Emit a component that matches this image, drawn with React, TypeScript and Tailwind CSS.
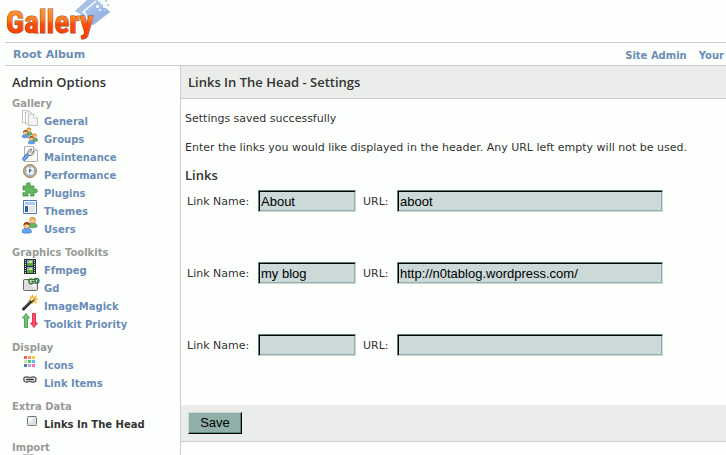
import type { ReactNode } from 'react';

type IconName =
  | 'pages'
  | 'groups'
  | 'wrench'
  | 'clock'
  | 'puzzle'
  | 'theme'
  | 'users'
  | 'film'
  | 'gd'
  | 'wand'
  | 'arrows'
  | 'grid'
  | 'chain'
  | 'box'
  | 'import';

interface MenuItem {
  label?: string;
  icon: IconName;
  active?: boolean;
}

const menu: { title: string; items: MenuItem[] }[] = [
  {
    title: 'Gallery',
    items: [
      { label: 'General', icon: 'pages' },
      { label: 'Groups', icon: 'groups' },
      { label: 'Maintenance', icon: 'wrench' },
      { label: 'Performance', icon: 'clock' },
      { label: 'Plugins', icon: 'puzzle' },
      { label: 'Themes', icon: 'theme' },
      { label: 'Users', icon: 'users' },
    ],
  },
  {
    title: 'Graphics Toolkits',
    items: [
      { label: 'Ffmpeg', icon: 'film' },
      { label: 'Gd', icon: 'gd' },
      { label: 'ImageMagick', icon: 'wand' },
      { label: 'Toolkit Priority', icon: 'arrows' },
    ],
  },
  {
    title: 'Display',
    items: [
      { label: 'Icons', icon: 'grid' },
      { label: 'Link Items', icon: 'chain' },
    ],
  },
  {
    title: 'Extra Data',
    items: [{ label: 'Links In The Head', icon: 'box', active: true }],
  },
  { title: 'Import', items: [{ icon: 'import' }] },
];

const links = [
  { name: 'About', url: 'aboot' },
  { name: 'my blog', url: 'http://n0tablog.wordpress.com/' },
  { name: '', url: '' },
];

const Person = ({ x, y, scale, hair, shirt }: { x: number; y: number; scale: number; hair: string; shirt: string }) => (
  <g transform={`translate(${x} ${y}) scale(${scale})`}>
    <path d="M0 8.5C0 6 1.6 5 4 5s4 1 4 3.5C7 9.7 1 9.7 0 8.5z" fill={shirt} stroke="#3d6a9c" strokeWidth=".4" />
    <circle cx="4" cy="3" r="2.5" fill="#f5c896" stroke="#96673a" strokeWidth=".4" />
    <path d="M1.3 3C1 .9 2.4 0 4 0s3 .9 2.7 3C5.8 1.9 4 2.6 3.2 1.8 2.8 2.6 2 2.4 1.3 3z" fill={hair} />
  </g>
);

const icons: Record<IconName, ReactNode> = {
  pages: (
    <g stroke="#b4b4b4" strokeWidth=".8" fill="#fff">
      <path d="M.5.5h5l3 3v9h-8z" />
      <path d="M3.5 2h5l3 3v9h-8z" />
      <path d="M6.5 4h5l4 4.5v7h-9z" fill="#f5f5f5" />
      <path d="M11.5 4c.3 2-.2 3.500 0 4 1 .2 3-.2 4 .5" />
    </g>
  ),
  groups: (
    <>
      <Person x={3.5} y={-0.5} scale={0.85} hair="#d99a26" shirt="#62b354" />
      <Person x={0} y={2} scale={0.85} hair="#9c4a1d" shirt="#5ea2e6" />
      <Person x={9} y={5.5} scale={0.85} hair="#d99a26" shirt="#62b354" />
      <Person x={6} y={8} scale={0.85} hair="#9c4a1d" shirt="#5ea2e6" />
    </>
  ),
  wrench: (
    <>
      <path d="M2.5.5h9l4 4v11h-13z" fill="#fafafa" stroke="#b4b4b4" />
      <path d="M11.5.5v4h4" fill="#e6e6e6" stroke="#b4b4b4" />
      <path d="M2 13 6 8.5" stroke="#3263a8" strokeWidth="3.5" strokeLinecap="round" />
      <path d="M2 13 6 8.5" stroke="#78aef0" strokeWidth="2" strokeLinecap="round" />
      <path d="M6 9c-1-3 .5-6 4-6L8.500 5 10 6.500 12 5c.3 3-2 5-5 4.500z" fill="#d8d8d8" stroke="#666" strokeWidth=".8" />
    </>
  ),
  clock: (
    <>
      <circle cx="8" cy="7" r="6.6" fill="#d8b27a" stroke="#8a6a3c" strokeWidth=".7" />
      <circle cx="8" cy="7" r="5" fill="#eef5fd" stroke="#6f89ad" strokeWidth=".8" />
      <path d="M8 3v1M8 10v1M4 7h1M11 7h1" stroke="#8494a8" />
      <path d="M7 4.5v5L10 6z" fill="#56718f" />
    </>
  ),
  puzzle: (
    <path
      d="M1 4h4c.4-.6-.8-1-.5-2.200C4.800.3 8 .3 8.300 1.800 8.500 3 7.500 3.400 8 4h4v3.500c.8.5 1-.6 2.200-.4 1.500.3 1.500 3.300 0 3.600-1.200.2-1.400-.9-2.200-.4V14H8.500c-.5-.7.5-1 .3-2-.3-1.200-2.700-1.200-3 0-.2 1 .7 1.300.3 2H1v-3.500c.7-.5 1 .5 2 .2 1.200-.3 1.200-2.700 0-3-1-.2-1.300.7-2 .3z"
      fill="#62b75f"
      stroke="#378b3a"
      strokeWidth=".8"
    />
  ),
  theme: (
    <>
      <path d="M1.5.5h13v13h-13z" fill="#fff" stroke="#4d78bd" />
      <path d="M3 2h10v3H3z" fill="#a3cdf5" />
      <path d="M3 6h3v6H3z" fill="#2c5fa8" />
      <path d="M7 6h6v6H7z" fill="#e3e3e3" />
    </>
  ),
  users: (
    <>
      <Person x={6} y={-1} scale={1.15} hair="#dba52f" shirt="#63b85a" />
      <Person x={0} y={4} scale={1.2} hair="#984619" shirt="#5ba5f5" />
    </>
  ),
  film: (
    <>
      <path d="M2 0h12v15H2z" fill="#2d2d2d" />
      <path d="M5 1h6v6H5zM5 8h6v6H5z" fill="#69b8f2" />
      <path d="M5 5c2-2 4 0 6-2v4H5zM5 12c2-2 4 0 6-2v4H5z" fill="#57a93e" />
      <path d="M7 2h3v2H7zM7 9h3v2H7z" fill="#f1dd59" />
      <path d="M3.500 1v14M12.500 1v14" stroke="#e0e0e0" strokeDasharray="1 1" />
    </>
  ),
  gd: (
    <>
      <rect x="1.5" y="2.5" width="14" height="11" rx="1" fill="#dedede" stroke="#656565" />
      <path d="M3 4h11v8z" fill="#f3f3f3" />
      <text x="6" y="7" fill="#1e7226" stroke="#1e7226" strokeWidth=".3" fontSize="8" fontWeight="700" fontFamily="Liberation Sans, sans-serif" transform="rotate(-7 11 6)">
        GD
      </text>
    </>
  ),
  wand: (
    <>
      <path d="m10.500-.5 1 2.500 3-1.500L13.500 3l2.500 1-2.500 1.500 1 3-3-1.500-1.500 2.500L9 6.500 6 6l2.500-2L8 1.500 10 2z" fill="#f9c440" stroke="#f0a02b" strokeWidth=".4" />
      <path d="M1.500 14 11 4.500" stroke="#292929" strokeWidth="3" strokeLinecap="round" />
      <path d="m9.500 5 1.500-1.200" stroke="#fff6cf" strokeWidth="2" strokeLinecap="round" />
      <path d="m2 12.500 7-7" stroke="#999" strokeWidth=".7" />
    </>
  ),
  arrows: (
    <>
      <path d="M4 .5 7.500 5h-2v9.500h-3V5h-2z" fill="#75c577" stroke="#359143" strokeWidth=".8" />
      <path d="M12 14.500 8.500 10h2V.5h3V10h2z" fill="#ff5069" stroke="#d91c3e" strokeWidth=".8" />
    </>
  ),
  grid: (
    <g transform="translate(0 2)">
      <path d="M2 0h3v3H2z" fill="#f8605f" />
      <path d="M6 0h3v3H6z" fill="#ed9a5f" />
      <path d="M10 0h3v3h-3z" fill="#f4cf4b" />
      <path d="M2 4h3v3H2z" fill="#cde6a5" />
      <path d="M6 4h3v3H6z" fill="#4bca70" />
      <path d="M10 4h3v3h-3z" fill="#65b5f0" />
      <path d="M2 8h3v3H2z" fill="#477fb9" />
      <path d="M6 8h3v3H6z" fill="#d595d8" />
      <path d="M10 8h3v3h-3z" fill="#fb70b8" />
    </g>
  ),
  chain: (
    <g fill="none" transform="translate(0 3)">
      <rect x="1.8" y="2" width="6" height="5" rx="2.500" stroke="#666" strokeWidth="1.500" />
      <rect x="8" y="2" width="6" height="5" rx="2.500" stroke="#666" strokeWidth="1.500" />
      <path d="M4.500 4.500h7" stroke="#fff" strokeWidth="2.600" />
      <path d="M4.500 4.500h7" stroke="#333" strokeWidth="1.400" strokeLinecap="round" />
    </g>
  ),
  box: (
    <>
      <rect x="5.5" y="3.5" width="9" height="9" rx="1" fill="#dde2e5" stroke="#747474" />
      <path d="M6.5 4.5h6l-6 6z" fill="#f7f8f9" />
    </>
  ),
  import: <path d="M1.5.5h10v14h-10z" fill="#ddd" stroke="#bbb" />,
};

const Icon = ({ name }: { name: IconName }) => (
  <svg className="h-4 w-4 shrink-0 overflow-visible" viewBox="0 0 16 16" aria-hidden="true">
    {icons[name]}
  </svg>
);

const Logo = () => (
  <svg className="block h-[42px] w-28" viewBox="0 0 112 42" role="img" aria-label="Gallery">
    <defs>
      <linearGradient id="orange" gradientUnits="userSpaceOnUse" x1="0" y1="8" x2="0" y2="38">
        <stop offset="0" stopColor="#ff9a35" />
        <stop offset=".4" stopColor="#ff7a20" />
        <stop offset=".55" stopColor="#fb4b08" />
        <stop offset="1" stopColor="#ff3a00" />
      </linearGradient>
      <linearGradient id="photo" x1="0" y1="0" x2="1" y2="1">
        <stop offset="0" stopColor="#b9cfee" />
        <stop offset="1" stopColor="#84a8dc" />
      </linearGradient>
    </defs>
    <path d="M88 0h4l13 12-17 13-12-7 1-8z" fill="url(#photo)" stroke="#c3cbd8" strokeWidth=".8" />
    <path d="M70 11 82 0h10L78 12l4 6z" fill="#a6c0e6" />
    <path d="M91 1 78 12c5 1 1 6 6 9" fill="none" stroke="#fff" strokeWidth="1.500" />
    <path d="M91 5h3v3h-3zM95 1h3v3h-3zM98 5h3v3h-3zM94 9h2v2h-2z" fill="#edf4fd" />
    <path d="M100 0h2v2h-2zM102 4h2v2h-2zM95 5h2v2h-2zM99 9h2v2h-2z" fill="#b5cbed" />
    <text
      x="1"
      y="33"
      fill="url(#orange)"
      stroke="#8c4a2c"
      strokeWidth="1"
      paintOrder="stroke"
      fontFamily="'Liberation Sans Narrow', 'Roboto Condensed', 'Liberation Sans', sans-serif"
      fontSize="31"
      fontWeight="700"
    >
      Gallery
    </text>
  </svg>
);

const inputClass =
  'h-[22px] border border-t-[#55857c] border-l-[#55857c] border-r-[#cbd9d9] border-b-[#cbd9d9] bg-[#cbd9d9] px-[2px] font-[Liberation_Sans,sans-serif] text-[13px] text-black shadow-[inset_1px_1px_0_#000,inset_-1px_-1px_0_#91afa9] outline-none';

const Sidebar = () => (
  <aside className="w-[180px] shrink-0 pl-3">
    <h2 className="mt-[6px] mb-1 font-[Open_Sans,sans-serif] text-[13px] leading-5 font-semibold text-[#333]">
      Admin Options
    </h2>
    <nav className="flex flex-col gap-[7px] text-[10px] font-bold">
      {menu.map((group) => (
        <section key={group.title}>
          <h3 className="h-[14px] leading-4 text-[#999]">{group.title}</h3>
          <ul className="pb-[2px] pl-[10px]">
            {group.items.map((item) => (
              <li key={item.icon} className="flex h-[18px] gap-[6px]">
                <Icon name={item.icon} />
                {item.label && (
                  <a href="#" className={`pt-1 leading-4 ${item.active ? 'text-[#333]' : 'text-[#6b8cb7]'}`}>
                    {item.label}
                  </a>
                )}
              </li>
            ))}
          </ul>
        </section>
      ))}
    </nav>
  </aside>
);

const App = () => {
  return (
    <div className="h-screen overflow-hidden bg-[#fdfffc] pl-[5px] font-[Verdana,DejaVu_Sans,sans-serif] text-[#333]">
      <header>
        <Logo />
        <div className="flex h-6 items-center justify-between border-y border-[#ccc] pt-[2px] pr-[2px] pl-2 text-[11px] font-bold text-[#6b8cb7]">
          <a href="#">Root Album</a>
          <div className="flex gap-3 text-[10px]">
            <a href="#">Site Admin</a>
            <a href="#">Your</a>
          </div>
        </div>
      </header>

      <div className="-ml-[5px] flex h-full">
        <Sidebar />

        <main className="min-w-0 flex-1 border-l border-[#ccc]">
          <h1 className="border-b border-[#ccc] bg-[#ebedea] py-[6px] pl-[7px] font-[Open_Sans,sans-serif] text-[13px] leading-5 font-semibold">
            Links In The Head - Settings
          </h1>
          <form onSubmit={(e) => e.preventDefault()}>
            <div className="px-1 pt-3 text-[11px] leading-4">
              <p>Settings saved successfully</p>
              <p className="mt-[13px] whitespace-nowrap">
                Enter the links you would like displayed in the header. Any URL left empty will not be used.
              </p>
              <h2 className="mt-[9px] font-[Open_Sans,sans-serif] text-[13px] leading-5 font-semibold">Links</h2>
            </div>
            <div className="mt-[5px] mb-[49px] flex flex-col gap-[50px] pl-[6px] text-[11px]">
              {links.map((link, i) => (
                <div key={i} className="flex items-center">
                  <label htmlFor={`name-${i}`} className="w-[71px] pt-[2px]">
                    Link Name:
                  </label>
                  <input id={`name-${i}`} type="text" defaultValue={link.name} className={`w-[98px] ${inputClass}`} />
                  <label htmlFor={`url-${i}`} className="ml-[7px] w-[34px] pt-[2px]">
                    URL:
                  </label>
                  <input id={`url-${i}`} type="text" defaultValue={link.url} className={`w-[266px] ${inputClass}`} />
                </div>
              ))}
            </div>
            <div className="border-b border-[#ccc] bg-[#ebedea] py-[7px] pl-[7px]">
              <button
                type="submit"
                className="block h-[22px] w-[54px] border border-t-[#cbd9d9] border-r-black border-b-black border-l-[#cbd9d9] bg-[#91afa9] font-[Liberation_Sans,sans-serif] text-[13px] leading-5 text-black shadow-[inset_-1px_-1px_0_#55857c]"
              >
                Save
              </button>
            </div>
          </form>
        </main>
      </div>
    </div>
  );
};

export default App;
